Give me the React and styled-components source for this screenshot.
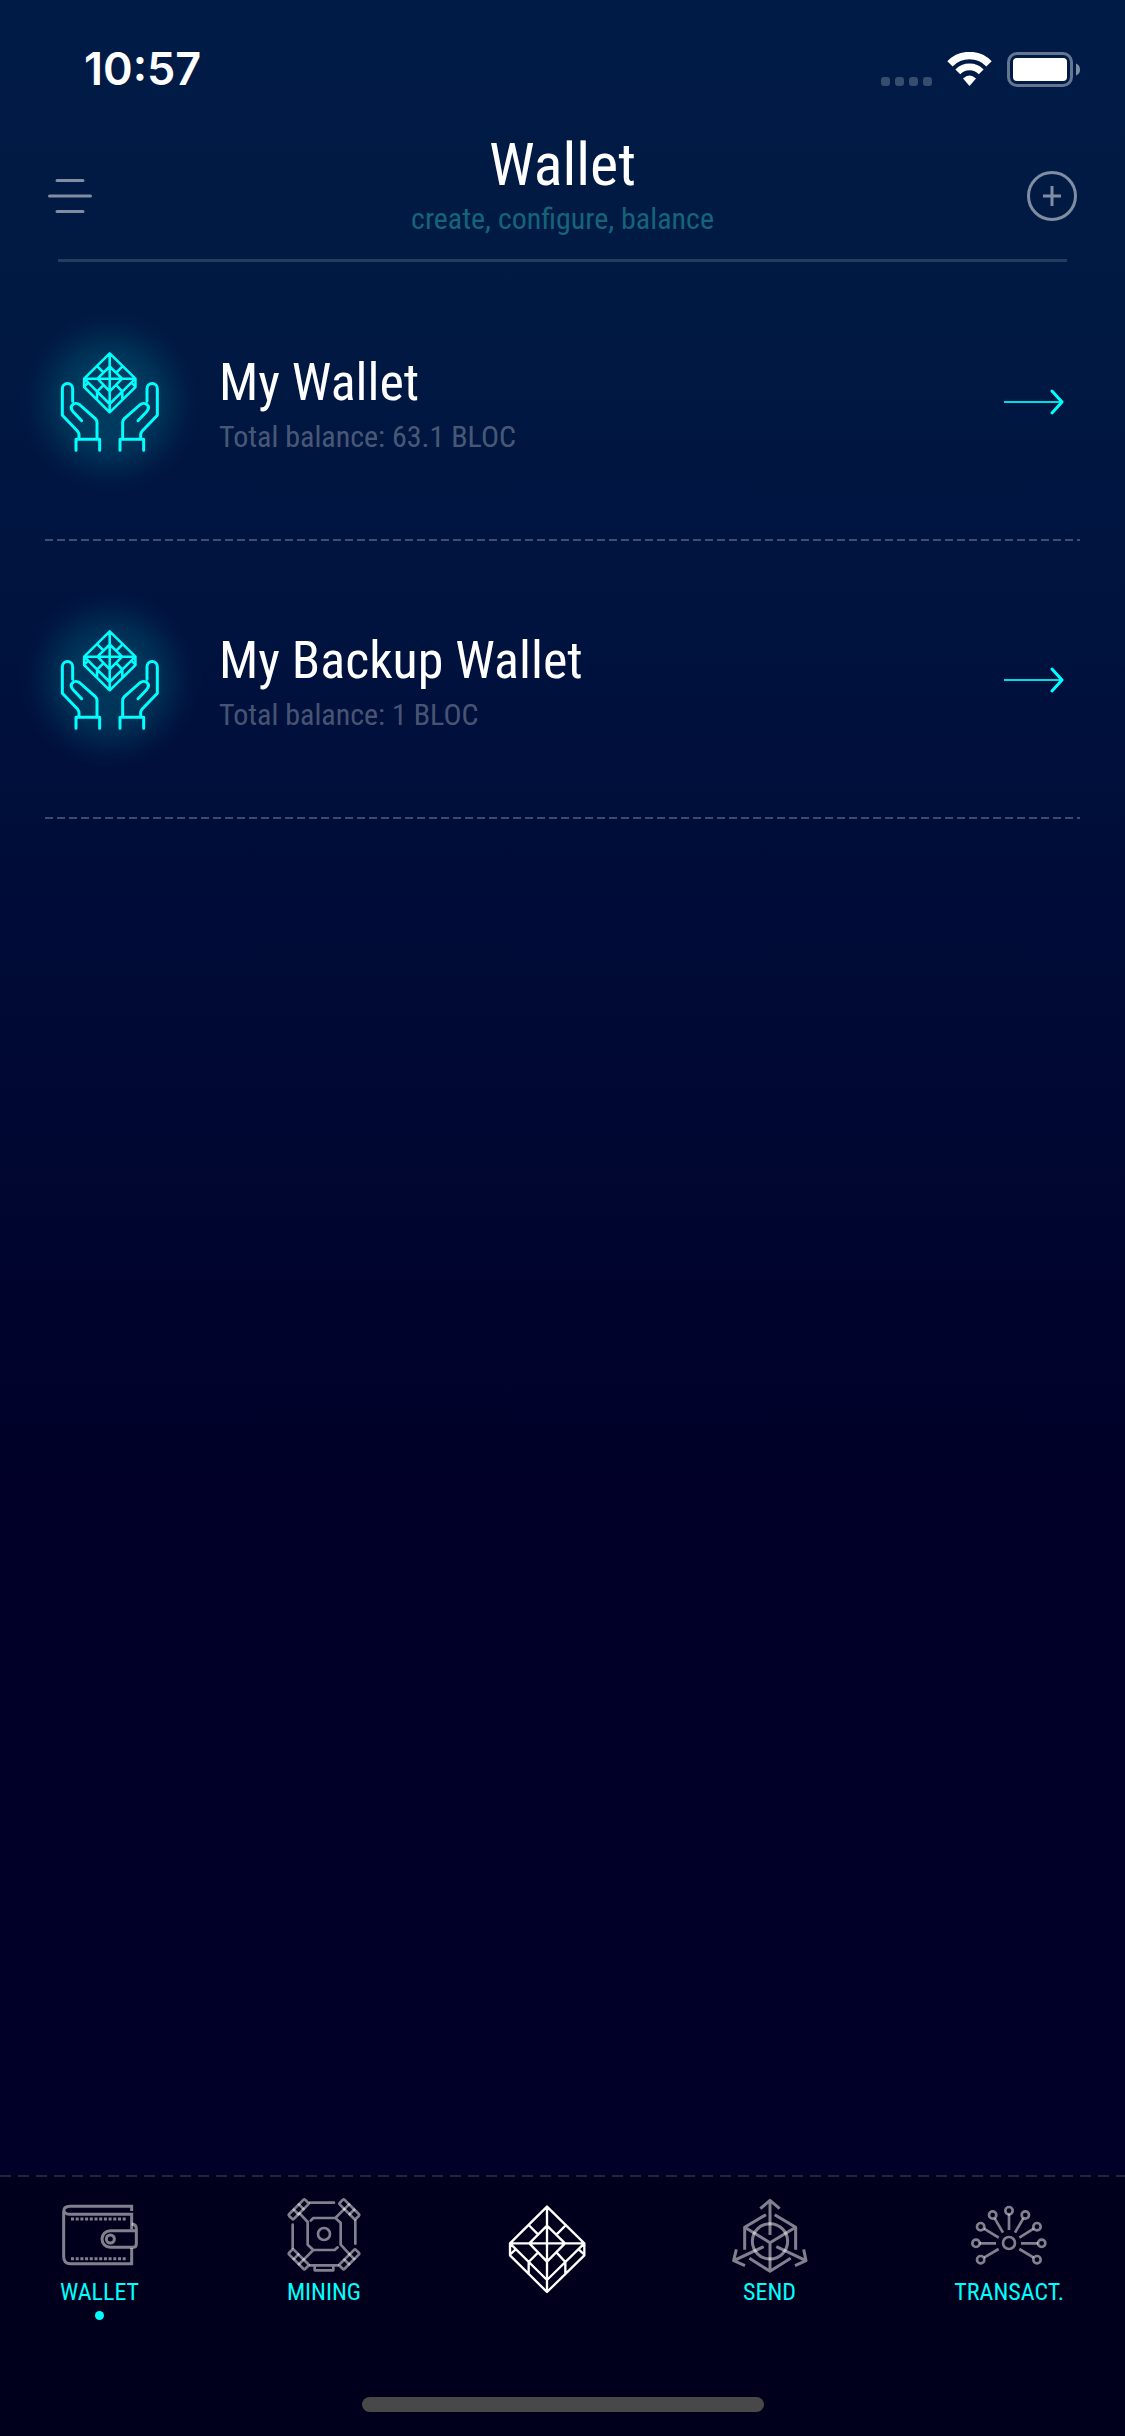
import React from "react";
import styled, { createGlobalStyle } from "styled-components";

const CYAN = "#00ffff";
const CONDENSED = `"Roboto Condensed", Roboto, "Liberation Sans", sans-serif`;

const GlobalStyle = createGlobalStyle`
  *, *::before, *::after { box-sizing: border-box; }
  body { margin: 0; background: #000028; }
`;

const Screen = styled.div`
  min-height: 100vh;
  display: flex;
  flex-direction: column;
  color: #fff;
  font-family: ${CONDENSED};
  background: linear-gradient(#001b46 0, #001a43 260px, #001440 560px, #000c38 880px, #000028 1500px, #000028 100%);
`;

const StatusBar = styled.div`
  display: flex;
  align-items: center;
  justify-content: space-between;
  height: 133px;
  padding: 5px 44px 0 84px;
`;

const Time = styled.time`
  font: 600 45px/50px Inter, "Liberation Sans", sans-serif;
`;

const StatusIcons = styled.div`
  display: flex;
  align-items: center;
  gap: 15px;
  svg { display: block; }
`;

const Header = styled.header`
  display: flex;
  align-items: center;
  justify-content: space-between;
  min-height: 126px;
  padding: 0 48px;
`;

const IconButton = styled.button`
  width: 50px;
  height: 50px;
  padding: 0;
  border: 0;
  background: none;
  color: rgba(255, 255, 255, 0.5);
  display: flex;
  align-items: center;
  justify-content: ${(p) => p.$align};
  cursor: pointer;
`;

const HeaderText = styled.div`
  display: flex;
  flex-direction: column;
  gap: 4px;
  padding-bottom: 22px;
  text-align: center;
`;

const Title = styled.h1`
  margin: 0;
  font-size: 60px;
  line-height: 64px;
  font-weight: 400;
`;

const Subtitle = styled.p`
  margin: 0;
  font-size: 30px;
  line-height: 36px;
  color: #16647b;
`;

const Divider = styled.hr`
  width: auto;
  height: 3px;
  margin: 0 58px 1px;
  border: 0;
  background: rgba(255, 255, 255, 0.15);
`;

const WalletList = styled.ul`
  flex: 1;
  margin: 0;
  padding: 0 45px;
  list-style: none;
`;

const WalletRow = styled.a`
  display: flex;
  align-items: center;
  gap: 60px;
  height: 278px;
  padding: 0 16px;
  color: inherit;
  text-decoration: none;
  background: repeating-linear-gradient(90deg, rgba(255, 255, 255, 0.25) 0 8px, transparent 8px 12px)
    left bottom / 100% 2px no-repeat;
`;

const Glow = styled.span`
  display: flex;
  position: relative;
  color: ${CYAN};
  &::before {
    content: "";
    position: absolute;
    inset: -42px;
    background: radial-gradient(
      closest-side,
      rgba(0, 190, 200, 0.22) 0,
      rgba(0, 190, 200, 0.21) 40%,
      rgba(0, 190, 200, 0.15) 58%,
      rgba(0, 190, 200, 0.07) 75%,
      rgba(0, 190, 200, 0.02) 88%,
      rgba(0, 190, 200, 0) 100%
    );
  }
  svg { position: relative; }
`;

const WalletText = styled.span`
  flex: 1;
  display: flex;
  flex-direction: column;
  gap: 6px;
  padding-top: 4px;
`;

const WalletName = styled.span`
  font-size: 52px;
  line-height: 60px;
`;

const Balance = styled.span`
  font-size: 30px;
  line-height: 36px;
  color: rgba(255, 255, 255, 0.3);
`;

const ArrowIcon = styled.svg`
  color: ${CYAN};
`;

const Footer = styled.footer`
  display: flex;
  flex-direction: column;
  align-items: center;
  gap: 77px;
  padding-bottom: 24px;
  background: repeating-linear-gradient(90deg, rgba(255, 255, 255, 0.14) 0 11px, transparent 11px 18px)
    left top / 100% 2px no-repeat #00001c;
`;

const TabBar = styled.nav`
  align-self: stretch;
  display: flex;
  align-items: flex-start;
  justify-content: space-between;
  padding: 22px 61px 0 60px;
`;

const Tab = styled.a`
  display: flex;
  flex-direction: column;
  align-items: center;
  gap: 5px;
  color: rgba(255, 255, 255, 0.5);
  text-decoration: none;
`;

const HomeTab = styled(Tab)`
  padding-top: 7px;
  color: #fff;
`;

const TabLabel = styled.span`
  font-size: 24px;
  line-height: 28px;
  color: ${CYAN};
`;

const ActiveDot = styled.i`
  width: 9px;
  height: 9px;
  border-radius: 50%;
  background: ${(p) => (p.$on ? CYAN : "transparent")};
`;

const HomeIndicator = styled.div`
  width: 402px;
  height: 15px;
  border-radius: 8px;
  background: #484848;
`;

const lineProps = {
  fill: "none",
  stroke: "currentColor",
  strokeLinecap: "round",
  strokeLinejoin: "round",
  "aria-hidden": true,
};

const GEM =
  "M203 80 92 190V226L203 336 315 226V190ZM92 190H315M203 80V336M203 137 257 190 203 245 150 190ZM92 190 203 300 315 190M148 135 176 163M260 135 232 163M176 218 148 246V281M232 218 258 246V281M94 222 109 208M313 222 298 208";

const HAND =
  "M128 244V206a15 15 0 0 0-31 0V286L143 334Q147 339 147 344V357M155 302 130 276C114 258 134 242 150 255L196 296Q201 301 201 308V357M138 391V358H209V391";

function HandsIcon() {
  return (
    <svg width="98" height="100" viewBox="93 96 294 300" overflow="visible" {...lineProps} strokeWidth="9">
      <path strokeWidth="11" transform="translate(99 45) scale(.69)" d={GEM} />
      <path d={HAND} />
      <path d={HAND} transform="translate(479 0) scale(-1 1)" />
    </svg>
  );
}

function GemIcon() {
  return (
    <svg width="76" height="90" viewBox="89 72 228 270" overflow="visible" {...lineProps} strokeWidth="7">
      <path d={GEM} />
    </svg>
  );
}

function WalletIcon() {
  return (
    <svg width="76" height="76" viewBox="96 111 228 228" {...lineProps} strokeLinecap="butt" strokeLinejoin="miter" strokeWidth="9">
      <path d="M305 153V139H120C106 139 101 146 101 154V290Q101 311 122 311H305V264M101 150Q104 163 120 163H305V208" />
      <path d="M320 212H241a25 25 0 0 0 0 50H309Q319 262 319 251V206Q319 193 305 192" />
      <circle cx="241" cy="237" r="12" />
      <path strokeDasharray="9 5.1" d="M123 177H289M123 296H289" />
    </svg>
  );
}

function Clamp({ at, turn }) {
  return (
    <g transform={`translate(${at}) rotate(${turn})`}>
      <rect x="-34" y="-10" width="68" height="20" rx="4" />
      <path d="M-11-10V10M11-10V10" />
    </g>
  );
}

function MiningIcon() {
  return (
    <svg width="76" height="76" viewBox="108 111 228 228" {...lineProps} strokeWidth="8">
      <Clamp at="146 148" turn={-45} />
      <Clamp at="298 148" turn={45} />
      <Clamp at="298 298" turn={-45} />
      <Clamp at="146 298" turn={45} />
      <path d="M180 128H252M316 182V251M128 194V264M180 316H264M194 318V331H250V318" />
      <path d="M149 160 173 186V254L190 270H254L263 262M190 270 164 296M182 182 190 174H256L272 188V254L296 280M256 174 282 148" />
      <circle cx="222" cy="222" r="18" />
    </svg>
  );
}

function SendIcon() {
  return (
    <svg width="76" height="76" viewBox="99 111 228 228" {...lineProps} strokeLinecap="butt" strokeWidth="9">
      <path d="M213 225V122M184 146 213 121 242 146M201 164 137 202V269M227 164 290 202V269M137 202 213 248 290 202M213 248V334M151 295 213 334 275 295" />
      <circle cx="213" cy="244" r="53" />
      <path d="M194 260 104 302M112 268 104 302 138 317M232 260 321 302M314 268 321 302 288 317" />
    </svg>
  );
}

const NODES = [
  [240, 152], [191, 165], [289, 165], [155, 200], [324, 200],
  [141, 250], [338, 250], [155, 299], [324, 299],
];

function TransactIcon() {
  return (
    <svg width="76" height="76" viewBox="126 111 228 228" {...lineProps} strokeLinecap="butt" strokeWidth="8">
      <circle cx="240" cy="249" r="18" />
      {NODES.map(([x, y]) => (
        <circle key={`${x}-${y}`} cx={x} cy={y} r="11" />
      ))}
      <path d="M240 163V210M197 175 222 218M283 175 258 218M165 206 209 233M314 206 271 233M152 250H201M327 250H276M165 293 209 267M314 293 271 267" />
    </svg>
  );
}

const wallets = [
  { name: "My Wallet", balance: "63.1 BLOC" },
  { name: "My Backup Wallet", balance: "1 BLOC" },
];

function NavTab({ label, active, children }) {
  return (
    <Tab href="#" aria-current={active ? "page" : undefined}>
      {children}
      <TabLabel>{label}</TabLabel>
      <ActiveDot $on={active} />
    </Tab>
  );
}

export default function App() {
  return (
    <Screen>
      <GlobalStyle />
      <StatusBar>
        <Time>10:57</Time>
        <StatusIcons>
          <svg width="51" height="35" viewBox="0 0 51 35" fill="#fff" fillOpacity=".22" aria-hidden="true">
            {[0, 14, 28, 42].map((x) => (
              <rect key={x} x={x} y="25" width="9" height="9" rx="3" />
            ))}
          </svg>
          <svg width="45" height="35" viewBox="0 0 45 35" fill="none" stroke="#fff" aria-hidden="true">
            <path strokeWidth="7.5" d="M3 11.8A27.2 27.2 0 0 1 42 11.8" />
            <path strokeWidth="6.8" d="M10.8 19.8A16.4 16.4 0 0 1 34.2 19.8" />
            <path fill="#fff" stroke="none" d="M16 26.5Q22.5 20.5 29 26.5L22.5 34Z" />
          </svg>
          <svg width="74" height="35" viewBox="0 0 74 35" fill="#fff" aria-hidden="true">
            <rect x="1.5" y="1.5" width="63" height="32" rx="8.5" fill="none" stroke="#fff" strokeWidth="3" opacity=".4" />
            <rect x="6" y="6" width="54" height="23" rx="4" />
            <path opacity=".5" d="M69 11.5Q73 13 73 17.5T69 23.5Z" />
          </svg>
        </StatusIcons>
      </StatusBar>

      <Header>
        <IconButton $align="flex-start" aria-label="Menu">
          <svg width="44" height="34" viewBox="0 0 44 34" {...lineProps} strokeWidth="3">
            <path d="M9 1.5H35M1.5 17H42.5M9 32.5H35" />
          </svg>
        </IconButton>
        <HeaderText>
          <Title>Wallet</Title>
          <Subtitle>create, configure, balance</Subtitle>
        </HeaderText>
        <IconButton $align="flex-end" aria-label="Add wallet">
          <svg width="50" height="50" viewBox="0 0 50 50" {...lineProps} strokeLinecap="butt" strokeWidth="3">
            <circle cx="25" cy="25" r="23.5" />
            <path d="M16 25H34M25 15V35" />
          </svg>
        </IconButton>
      </Header>
      <Divider />

      <WalletList>
        {wallets.map((w) => (
          <li key={w.name}>
            <WalletRow href="#">
              <Glow>
                <HandsIcon />
              </Glow>
              <WalletText>
                <WalletName>{w.name}</WalletName>
                <Balance>Total balance: {w.balance}</Balance>
              </WalletText>
              <ArrowIcon width="60" height="26" viewBox="0 0 60 26" {...lineProps} strokeWidth="3">
                <path strokeWidth="2" strokeLinecap="butt" opacity=".85" d="M0 13H57" />
                <path d="M48 2 58 13 48 24" />
              </ArrowIcon>
            </WalletRow>
          </li>
        ))}
      </WalletList>

      <Footer>
        <TabBar>
          <NavTab label="WALLET" active>
            <WalletIcon />
          </NavTab>
          <NavTab label="MINING">
            <MiningIcon />
          </NavTab>
          <HomeTab href="#" aria-label="Home">
            <GemIcon />
          </HomeTab>
          <NavTab label="SEND">
            <SendIcon />
          </NavTab>
          <NavTab label="TRANSACT.">
            <TransactIcon />
          </NavTab>
        </TabBar>
        <HomeIndicator />
      </Footer>
    </Screen>
  );
}
